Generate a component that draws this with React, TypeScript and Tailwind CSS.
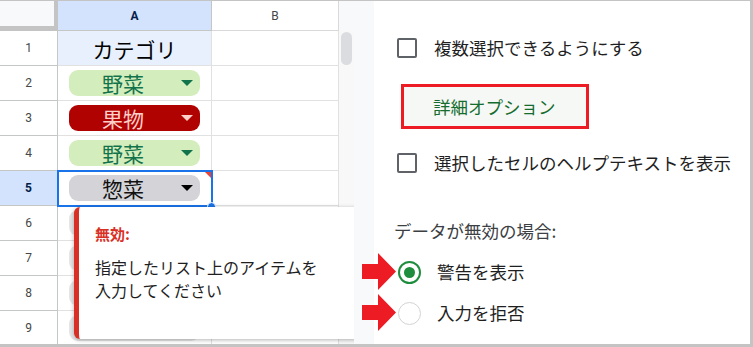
import React from "react";

const JP = { fontFamily: '"Noto Sans CJK JP", "Noto Sans", sans-serif' };
const RB = { fontFamily: 'Roboto, "Liberation Sans", Arial, sans-serif' };

type Chip = { text: string; bg: string; fg: string; arrow: string } | null;

const rows: { n: number; chip: Chip; header?: boolean }[] = [
  { n: 1, chip: null, header: true },
  { n: 2, chip: { text: "野菜", bg: "bg-[#d4edbc]", fg: "text-[#11734b]", arrow: "border-t-[#11734b]" } },
  { n: 3, chip: { text: "果物", bg: "bg-[#b10202]", fg: "text-[#ffcfc9]", arrow: "border-t-[#ffcfc9]" } },
  { n: 4, chip: { text: "野菜", bg: "bg-[#d4edbc]", fg: "text-[#11734b]", arrow: "border-t-[#11734b]" } },
  { n: 5, chip: { text: "惣菜", bg: "bg-[#d4d4d8]", fg: "text-[#111111]", arrow: "border-t-[#000000]" } },
  { n: 6, chip: { text: "", bg: "bg-[#e6e6e6]", fg: "", arrow: "" } },
  { n: 7, chip: { text: "", bg: "bg-[#e6e6e6]", fg: "", arrow: "" } },
  { n: 8, chip: { text: "", bg: "bg-[#e6e6e6]", fg: "", arrow: "" } },
  { n: 9, chip: { text: "", bg: "bg-[#e6e6e6]", fg: "", arrow: "" } },
];

function Sheet() {
  return (
    <div className="relative w-[354px] h-full overflow-hidden bg-white">
      {/* header */}
      <div className="flex h-[30px]">
        <div className="w-[58px] h-[30px] bg-[#f8f9fa] border-r-4 border-b-[5px] border-[#c4c4c4]" />
        <div style={RB} className="w-[154px] h-[30px] bg-[#d3e3fd] border-r border-b border-[#c4c7c5] flex items-center justify-center text-[12px] font-bold text-[#041e49]">A</div>
        <div style={RB} className="w-[127px] h-[30px] bg-white border-r border-b border-[#d9d9d9] flex items-center justify-center text-[12px] text-[#444746]">B</div>
        <div className="w-[15px] h-[30px] bg-[#f8f9fa]" />
      </div>
      {rows.map((r) => (
        <div key={r.n} className="flex h-[35px]">
          <div
            style={RB}
            className={
              "w-[58px] h-[35px] border-r border-b border-[#c4c7c5] flex items-center justify-center text-[12px] " +
              (r.n === 5 ? "bg-[#d3e3fd] font-bold text-[#041e49]" : "bg-white text-[#444746]")
            }
          >
            {r.n}
          </div>
          <div
            className={
              "w-[154px] h-[35px] border-r border-b border-[#e1e1e1] flex items-center " +
              (r.header ? "bg-[#e8f0fe] justify-center" : "bg-white pl-[11px]")
            }
          >
            {r.header ? (
              <span style={JP} className="text-[21px] leading-none text-black pt-[2px]">カテゴリ</span>
            ) : r.chip ? (
              <div className={"w-[131px] h-[26px] rounded-[9px] flex items-center " + r.chip.bg}>
                {r.chip.text && (
                  <>
                    <span style={JP} className={"ml-[33px] text-[21px] leading-none pt-[1px] " + r.chip.fg}>{r.chip.text}</span>
                    <span className={"ml-auto mr-[7px] block w-0 h-0 border-l-[6.5px] border-r-[6.5px] border-t-[6px] border-l-transparent border-r-transparent " + r.chip.arrow} />
                  </>
                )}
              </div>
            ) : null}
          </div>
          <div className="w-[127px] h-[35px] border-r border-b border-[#e1e1e1] bg-white" />
          <div className="w-[15px] h-[35px] bg-[#f8f8f8] relative">
            {r.n === 1 && <div className="absolute left-[2px] top-[1px] w-[11px] h-[33px] rounded-full bg-[#dadce0]" />}
          </div>
        </div>
      ))}

      {/* selected cell outline */}
      <div className="absolute left-[57px] top-[169px] w-[156px] h-[37px] border-2 border-[#1a73e8]" />
      <div className="absolute left-[205px] top-[171px] w-0 h-0 border-t-[6px] border-l-[6px] border-t-[#ea4335] border-l-transparent" />
      <div className="absolute left-[207px] top-[201px] w-[9px] h-[9px] rounded-full bg-[#1a73e8] border border-white" />

      {/* tooltip */}
      <div className="absolute left-[74px] top-[206px] w-[320px] h-[132px] bg-white rounded-l-[6px] border-l-[5px] border-[#d93025] shadow-[0_1px_4px_rgba(0,0,0,0.3)] pl-[16px]">
        <div style={JP} className="mt-[17px] text-[15px] font-bold leading-[20px] text-[#d93025]">無効:</div>
        <div style={JP} className="mt-[12px] text-[16px] leading-[23px] text-[#1f1f1f]">
          指定したリスト上のアイテムを
          <br />
          入力してください
        </div>
      </div>
    </div>
  );
}

function Checkbox({ label, mt }: { label: string; mt: string }) {
  return (
    <div className={"flex items-center h-[20px] " + mt}>
      <div className="ml-[23px] w-[20px] h-[20px] rounded-[2px] border-2 border-[#5f6368]" />
      <span style={JP} className="ml-[17px] text-[17.5px] leading-none text-[#1f1f1f]">{label}</span>
    </div>
  );
}

function Panel() {
  return (
    <div className="flex-1 h-full bg-white border-r-[3px] border-[#c4c4c4] flex flex-col">
      <Checkbox label="複数選択できるようにする" mt="mt-[37px]" />
      <div className="mt-[26px] ml-[27px] w-[188px] h-[45px] border-[3px] border-[#ed1c24] bg-[#f5f8f5] flex items-center">
        <span style={JP} className="ml-[29px] text-[17.5px] leading-none text-[#146c2e]">詳細オプション</span>
      </div>
      <Checkbox label="選択したセルのヘルプテキストを表示" mt="mt-[24px]" />
      <div style={JP} className="mt-[46px] ml-[20px] h-[24px] flex items-center text-[17.5px] leading-none text-[#3c4043]">データが無効の場合:</div>
      <div className="mt-[17px] h-[24px] flex items-center">
        <div className="ml-[24px] w-[23px] h-[23px] rounded-full border-[2.5px] border-[#1e8e3e] flex items-center justify-center">
          <div className="w-[11px] h-[11px] rounded-full bg-[#1e8e3e]" />
        </div>
        <span style={JP} className="ml-[16px] text-[17.5px] leading-none text-[#1f1f1f]">警告を表示</span>
      </div>
      <div className="mt-[17px] h-[24px] flex items-center">
        <div className="ml-[24px] w-[23px] h-[23px] rounded-full border-[1.5px] border-[#d3d3d3]" />
        <span style={JP} className="ml-[16px] text-[17.5px] leading-none text-[#1f1f1f]">入力を拒否</span>
      </div>
    </div>
  );
}

function RedArrow({ top }: { top: string }) {
  return (
    <svg className={"absolute left-[362px] " + top} width="35" height="37" viewBox="0 0 35 37">
      <polygon points="0,11 16,11 16,0 34,18.5 16,37 16,26 0,26" fill="#ed1c24" />
    </svg>
  );
}

export default function App() {
  return (
    <div className="relative w-[753px] h-[347px] overflow-hidden bg-white border-t border-b-[3px] border-[#c4c4c4] flex">
      <Sheet />
      <div className="w-[20px] h-full bg-[#f8f9fa]" />
      <Panel />
      <RedArrow top="top-[252px]" />
      <RedArrow top="top-[293px]" />
    </div>
  );
}
